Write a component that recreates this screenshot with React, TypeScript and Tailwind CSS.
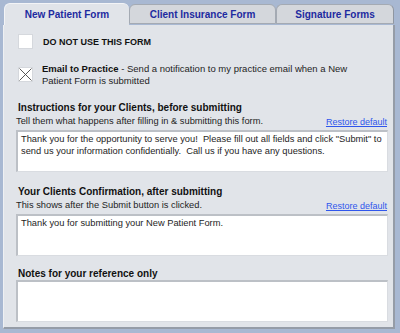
import React from "react";

const font = { fontFamily: '"Liberation Sans", Arial, sans-serif' };

function TextBox({ children }: { children?: React.ReactNode }) {
  return (
    <div className="h-[42px] w-[372px] bg-white border-t-2 border-l-2 border-[#bcc0c6] border-r border-b border-r-[#d9dce1] border-b-[#d9dce1] pl-[3px] pr-[4px] pt-[1px] text-[9.3px] leading-[12px] text-[#1e1e1e]">
      {children}
    </div>
  );
}

function SubRow({ text }: { text: string }) {
  return (
    <div className="mt-[1px] flex h-[12px] items-end justify-between pr-[2px]">
      <span className="text-[9.3px] leading-[12px] text-[#1e1e1e]">{text}</span>
      <span className="mb-[-1px] text-[9px] leading-[11px] text-[#2f56ec] underline">Restore default</span>
    </div>
  );
}

export default function App() {
  return (
    <div className="relative h-[333px] w-[400px] overflow-hidden bg-[#a8b8d2]" style={font}>
      {/* Tabs */}
      <div className="flex h-[25px] items-end pl-[4px] pt-[3px]">
        <div className="flex h-[22px] w-[125px] items-center justify-center rounded-t-[6px] border-l border-t border-[#f3f4f6] bg-[#e1e4e9] text-[10px] font-bold text-[#1d2aa0]">
          New Patient Form
        </div>
        <div className="mb-[1px] flex h-[20px] w-[147px] items-center justify-center rounded-t-[6px] border border-[#a4aab3] bg-[#d4d7dc] text-[10px] font-bold text-[#1d2aa0]">
          Client Insurance Form
        </div>
        <div className="mb-[1px] flex h-[20px] w-[118px] items-center justify-center rounded-t-[6px] border border-[#a4aab3] border-r-[#8f96a1] bg-[#d4d7dc] text-[10px] font-bold text-[#1d2aa0]">
          Signature Forms
        </div>
      </div>

      {/* Panel */}
      <div className="ml-[3px] h-[304px] w-[392px] border-l border-[#eef0f3] border-r-2 border-b-2 border-r-[#959ca7] border-b-[#959ca7] bg-[#e1e4e9]">
        <div className="flex flex-col pl-[11px] pt-[9px]">
          {/* Row 1 */}
          <div className="flex items-center pl-[3px]">
            <div className="h-[15px] w-[15px] border border-[#d5d8dd] bg-white" />
            <span className="ml-[10px] text-[9px] font-bold leading-[12px] text-[#111]">DO NOT USE THIS FORM</span>
          </div>

          {/* Row 2 */}
          <div className="mt-[14px] flex items-start pl-[3px]">
            <div className="mt-[4px] h-[15px] w-[15px] border border-[#d5d8dd] bg-white">
              <svg width="13" height="13" viewBox="0 0 13 13" className="block">
                <line x1="0.5" y1="0.5" x2="12.5" y2="12.5" stroke="#444" strokeWidth="0.9" />
                <line x1="12.5" y1="0.5" x2="0.5" y2="12.5" stroke="#444" strokeWidth="0.9" />
              </svg>
            </div>
            <p className="ml-[9px] w-[318px] text-[9.5px] leading-[12px] text-[#1e1e1e]">
              <span className="font-bold text-[#111]">Email to Practice</span> - Send a notification to my practice email when a New Patient Form is submitted
            </p>
          </div>

          {/* Instructions */}
          <div className="mt-[15px] pl-[3px] text-[10px] font-bold leading-[12px] text-[#111]">
            Instructions for your Clients, before submitting
          </div>
          <div className="pl-[1px] w-[374px]">
            <SubRow text="Tell them what happens after filling in & submitting this form." />
          </div>
          <div className="mt-[3px] pl-[1px]">
            <TextBox>
              Thank you for the opportunity to serve you!&nbsp; Please fill out all fields and click "Submit" to send us your information confidentially.&nbsp; Call us if you have any questions.
            </TextBox>
          </div>

          {/* Confirmation */}
          <div className="mt-[14px] pl-[3px] text-[10px] font-bold leading-[12px] text-[#111]">
            Your Clients Confirmation, after submitting
          </div>
          <div className="pl-[1px] w-[374px]">
            <SubRow text="This shows after the Submit button is clicked." />
          </div>
          <div className="mt-[3px] pl-[1px]">
            <TextBox>Thank you for submitting your New Patient Form.</TextBox>
          </div>

          {/* Notes */}
          <div className="mt-[12px] pl-[3px] text-[10px] font-bold leading-[12px] text-[#111]">
            Notes for your reference only
          </div>
          <div className="pl-[1px]">
            <TextBox />
          </div>
        </div>
      </div>
    </div>
  );
}
